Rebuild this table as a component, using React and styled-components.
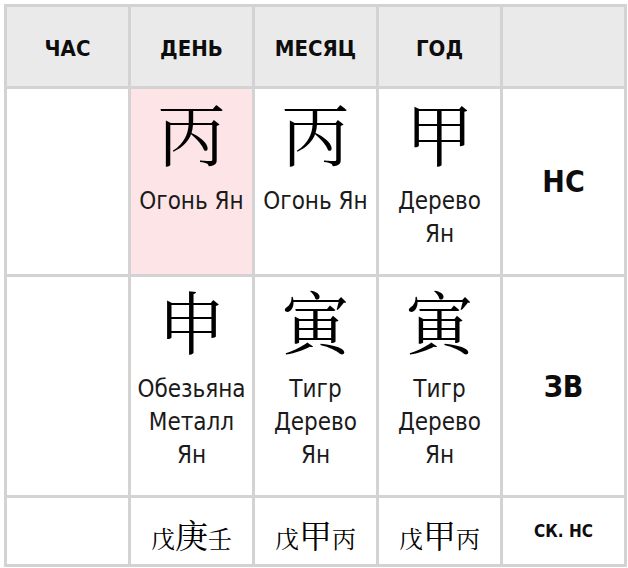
import React from "react"
import styled, { createGlobalStyle } from "styled-components"

const GlobalStyle = createGlobalStyle`
  body {
    margin: 0;
    background: #fff;
    font-family: "DejaVu Sans Condensed", "Liberation Sans Narrow", "Roboto", sans-serif;
    color: #111;
  }
`

const columns = ["ЧАС", "ДЕНЬ", "МЕСЯЦ", "ГОД", ""]

const stems = [
  null,
  { glyph: "丙", text: ["Огонь Ян"], active: true },
  { glyph: "丙", text: ["Огонь Ян"] },
  { glyph: "甲", text: ["Дерево", "Ян"] },
]

const branches = [
  null,
  { glyph: "申", text: ["Обезьяна", "Металл", "Ян"] },
  { glyph: "寅", text: ["Тигр", "Дерево", "Ян"] },
  { glyph: "寅", text: ["Тигр", "Дерево", "Ян"] },
]

const hidden = [null, ["戊", "庚", "壬"], ["戊", "甲", "丙"], ["戊", "甲", "丙"]]

const Pillar = ({ item, active }) => (
  <Cell $active={active}>
    {item && (
      <>
        <Glyph>{item.glyph}</Glyph>
        <Caption>
          {item.text.map((t) => (
            <span key={t}>{t}</span>
          ))}
        </Caption>
      </>
    )}
  </Cell>
)

const App = () => {
  return (
    <>
      <GlobalStyle />
      <Table>
        {columns.map((c, i) => (
          <HeadCell key={i}>{c}</HeadCell>
        ))}

        {stems.map((s, i) => (
          <Pillar key={"s" + i} item={s} active={s && s.active} />
        ))}
        <Label>НС</Label>

        {branches.map((b, i) => (
          <Pillar key={"b" + i} item={b} />
        ))}
        <Label>ЗВ</Label>

        {hidden.map((h, i) => (
          <HiddenCell key={"h" + i}>
            {h && (
              <>
                <Small>{h[0]}</Small>
                <Main>{h[1]}</Main>
                <Small>{h[2]}</Small>
              </>
            )}
          </HiddenCell>
        ))}
        <Label $small>СК. НС</Label>
      </Table>
    </>
  )
}

export default App

const Table = styled.div`
  display: grid;
  grid-template-columns: repeat(5, minmax(0, 1fr));
  grid-template-rows: 79px 185px 218px 66px;
  gap: 3px;
  padding: 3px;
  width: 623px;
  box-sizing: border-box;
  margin: 4px 0 0 4px;
  background: #d3d3d3;
`

const HeadCell = styled.div`
  background: #eaeaea;
  display: flex;
  align-items: center;
  justify-content: center;
  padding-top: 4px;
  font-weight: 700;
  font-size: 22px;
  color: #0d0d0d;
`

const Cell = styled.div`
  background: ${(p) => (p.$active ? "#fde5e7" : "#fff")};
  display: flex;
  flex-direction: column;
  align-items: center;
  padding-top: 2px;
`

const Glyph = styled.div`
  font-family: "Noto Serif CJK SC", "Noto Sans CJK SC", serif;
  font-size: 68px;
  line-height: 1.2;
  color: #000;
`

const Caption = styled.div`
  display: flex;
  flex-direction: column;
  align-items: center;
  font-size: 24px;
  line-height: 33px;
  white-space: nowrap;
  color: #1a1a1a;
  margin-top: 12px;
`

const Label = styled.div`
  background: #fff;
  display: flex;
  align-items: center;
  justify-content: center;
  font-weight: 700;
  font-size: ${(p) => (p.$small ? "17px" : "30px")};
  color: #0d0d0d;
`

const HiddenCell = styled.div`
  background: #fff;
  display: flex;
  align-items: baseline;
  justify-content: center;
  padding-top: 12px;
  font-family: "Noto Serif CJK SC", "Noto Sans CJK SC", serif;
  color: #000;
`

const Small = styled.span`
  font-size: 24px;
`

const Main = styled.span`
  font-size: 33px;
`
